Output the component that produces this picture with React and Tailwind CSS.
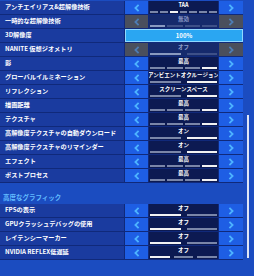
import React from "react";

const rows = [
  { label: "アンチエイリアス&超解像技術", value: "TAA", segs: 7, on: 2 },
  { label: "一時的な超解像技術", value: "無効", segs: 4, on: 0, disabled: true },
  { label: "3D解像度", value: "100%", full: true },
  { label: "NANITE 仮想ジオメトリ", value: "オフ", segs: 2, on: 0, disabled: true },
  { label: "影", value: "最高", segs: 4, on: 3 },
  { label: "グローバルイルミネーション", value: "アンビエントオクルージョン", segs: 2, on: 1 },
  { label: "リフレクション", value: "スクリーンスペース", segs: 2, on: 1 },
  { label: "描画距離", value: "最高", segs: 4, on: 3 },
  { label: "テクスチャ", value: "最高", segs: 4, on: 3 },
  { label: "高解像度テクスチャの自動ダウンロード", value: "オン", segs: 2, on: 1 },
  { label: "高解像度テクスチャのリマインダー", value: "オン", segs: 2, on: 1 },
  { label: "エフェクト", value: "最高", segs: 4, on: 3 },
  { label: "ポストプロセス", value: "最高", segs: 4, on: 3 },
];

const advanced = [
  { label: "FPSの表示", value: "オフ", segs: 2, on: 0 },
  { label: "GPUクラッシュデバッグの使用", value: "オフ", segs: 2, on: 0 },
  { label: "レイテンシーマーカー", value: "オフ", segs: 2, on: 0 },
  { label: "NVIDIA REFLEX低遅延", value: "オフ", segs: 3, on: 0 },
];

const Chevron = ({ dir, disabled }) => (
  <svg width="6" height="8" viewBox="0 0 6 8" fill="none">
    <polyline
      points={dir === "left" ? "4.6,0.8 1.4,4 4.6,7.2" : "1.4,0.8 4.6,4 1.4,7.2"}
      stroke={disabled ? "#4d7cb4" : "#4db3ff"}
      strokeWidth="1.8"
    />
  </svg>
);

const Row = ({ row }) => {
  const gap = row.segs >= 4 ? "gap-[2px]" : row.segs === 3 ? "gap-[4px]" : "gap-[6px]";
  return (
    <div className="flex h-[14px] gap-px border-b border-[#10297a] bg-[#10297a]">
      <div className="w-[124px] bg-[#1a3b9f] flex items-center pl-[5px] text-white text-[6.2px] font-bold whitespace-nowrap overflow-hidden leading-none">
        {row.label}
      </div>
      {row.full ? (
        <div className="w-[118px] bg-[#2aa6f2] border border-[#8fd8ff] flex items-center justify-center text-white text-[6px] font-bold leading-none">
          {row.value}
        </div>
      ) : (
        <>
          <div
            className={
              "w-[23px] flex items-center justify-center " +
              (row.disabled ? "bg-[#4a4f5d]" : "bg-[#1e5ee4]")
            }
          >
            <Chevron dir="left" disabled={row.disabled} />
          </div>
          <div
            className={
              "w-[69px] flex flex-col overflow-hidden " +
              (row.disabled ? "bg-[#162a6c]" : "bg-[#0c1a52]")
            }
          >
            <div
              className={
                "flex-1 flex items-center justify-center text-[5.5px] font-bold whitespace-nowrap leading-none " +
                (row.disabled ? "text-[#8d9bc9]" : "text-white")
              }
            >
              {row.value}
            </div>
            <div className={"flex px-[1px] pb-[1px] " + gap}>
              {Array.from({ length: row.segs }).map((_, i) => (
                <div
                  key={i}
                  className={
                    "flex-1 h-[2px] " +
                    (i === row.on
                      ? row.disabled
                        ? "bg-[#8a9ac0]"
                        : "bg-[#f2f2f2]"
                      : row.disabled
                      ? "bg-[#3e5088]"
                      : "bg-[#7a86a8]")
                  }
                />
              ))}
            </div>
          </div>
          <div
            className={
              "w-[24px] flex items-center justify-center " +
              (row.disabled ? "bg-[#4a4f5d]" : "bg-[#1e5ee4]")
            }
          >
            <Chevron dir="right" disabled={row.disabled} />
          </div>
        </>
      )}
    </div>
  );
};

export default function App() {
  return (
    <div
      className="w-[254px] h-[276px] bg-[#1b4cc0] overflow-hidden flex"
      style={{ fontFamily: '"Noto Sans CJK JP", "Noto Sans", sans-serif' }}
    >
      <div className="w-[243px] pt-px flex flex-col">
        {rows.map((r) => (
          <Row key={r.label} row={r} />
        ))}
        <div className="h-[21px] flex items-end pb-[4px] pl-[3px] text-[#62bcff] text-[6.5px] font-bold leading-none">
          高度なグラフィック
        </div>
        {advanced.map((r) => (
          <Row key={r.label} row={r} />
        ))}
      </div>
      <div className="flex-1 pt-[115px] pl-[4px]">
        <div className="w-[2px] h-[143px] bg-[#dfe6f5]" />
      </div>
    </div>
  );
}
